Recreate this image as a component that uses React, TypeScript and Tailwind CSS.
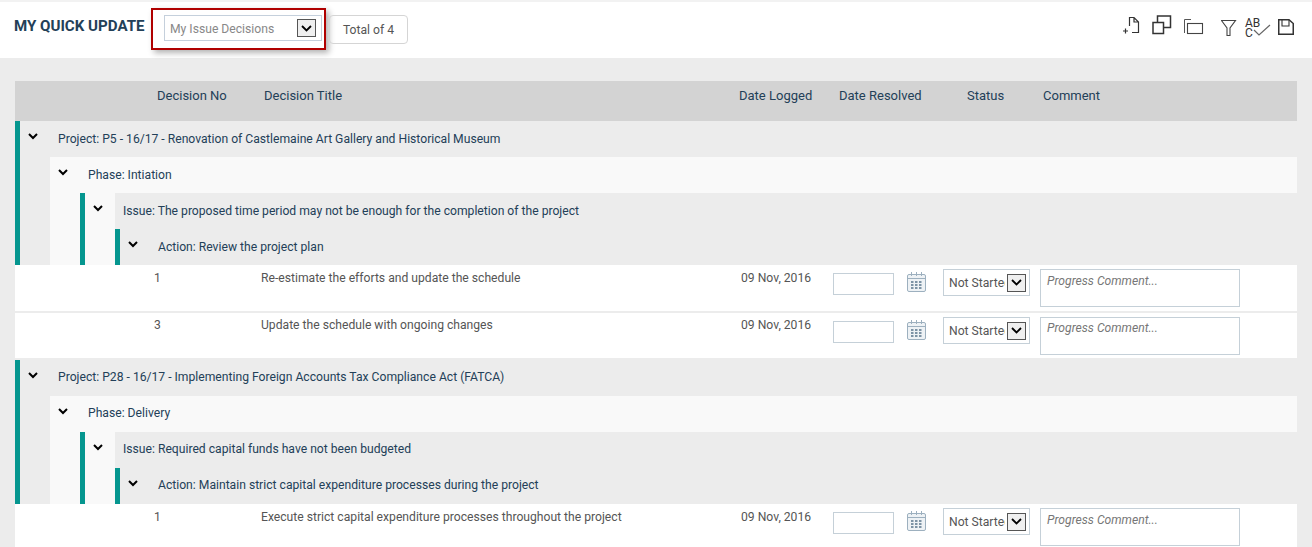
const font = "[font-family:Roboto,'Liberation_Sans',sans-serif]";

function Chevron({ className = "" }: { className?: string }) {
  return (
    <svg width="10" height="7" viewBox="0 0 10 7" className={className}>
      <path d="M1 1l4 4 4-4" fill="none" stroke="#000" strokeWidth="2" />
    </svg>
  );
}

function SelectArrow() {
  return (
    <div className="flex h-[18px] w-[19px] shrink-0 items-center justify-center border border-[#555] bg-[#efefef]">
      <svg width="11" height="7" viewBox="0 0 11 7">
        <path d="M1 1l4.5 4.5L10 1" fill="none" stroke="#000" strokeWidth="1.8" />
      </svg>
    </div>
  );
}

function CalendarIcon() {
  return (
    <svg width="20" height="20" viewBox="0 0 20 20" className="block">
      <rect x="0.5" y="2.5" width="18" height="17" rx="1.5" fill="#eef2f5" stroke="#9db0bf" />
      <path d="M1 6.5h17" stroke="#9db0bf" />
      <path d="M4.5 0v4M9.5 0v4M14.5 0v4" stroke="#9db0bf" />
      <path
        d="M4 9h2.5v2H4zM8 9h2.5v2H8zM12 9h2.5v2H12zM4 12h2.5v2H4zM8 12h2.5v2H8zM12 12h2.5v2H12zM4 15h2.5v2H4zM8 15h2.5v2H8zM12 15h2.5v2H12z"
        fill="#7d93a5"
      />
    </svg>
  );
}

function ToolIcons() {
  return (
    <div className="flex items-start">
      <svg width="18" height="20" viewBox="0 0 18 20" className="mt-[14px] block">
        <path d="M6.5 10V1.5H11L15.5 6V16.5H9M11 1.5V6H15.5" fill="none" stroke="#333" strokeWidth="1.2" />
        <path d="M0 15h5M2.5 12.5v5" stroke="#333" strokeWidth="1.2" />
      </svg>
      <svg width="20" height="20" viewBox="0 0 20 20" className="ml-[11px] mt-[13px] block">
        <rect x="1" y="7.5" width="10.5" height="11" fill="none" stroke="#333" strokeWidth="1.5" />
        <path d="M5.5 7V1H18.5V12.5H12" fill="none" stroke="#333" strokeWidth="1.5" />
      </svg>
      <svg width="20" height="18" viewBox="0 0 20 18" className="ml-[12px] mt-[16px] block">
        <path d="M0.5 15V1.5H7" fill="none" stroke="#555" strokeWidth="1" />
        <rect x="3.5" y="5.5" width="15" height="10" fill="none" stroke="#444" strokeWidth="1.1" />
      </svg>
      <svg width="16" height="18" viewBox="0 0 16 18" className="ml-[17px] mt-[17px] block">
        <path d="M0.5 1.5H14.5L9 9V16.5H6V9z" fill="none" stroke="#444" strokeWidth="1.1" />
      </svg>
      <div className="relative ml-[8px] mt-[16px] h-[21px] w-[26px] text-[12px] leading-[10px] text-[#333]">
        <div>AB</div>
        <div>C</div>
        <svg width="18" height="12" viewBox="0 0 18 12" className="absolute left-[8px] top-[6px]">
          <path d="M1 6l5 5L17 1" fill="none" stroke="#666" strokeWidth="1.2" />
        </svg>
      </div>
      <svg width="17" height="17" viewBox="0 0 17 17" className="ml-[7px] mt-[17px] block">
        <path d="M0.75 0.75H11L15.25 4.5V15.25H0.75z" fill="none" stroke="#333" strokeWidth="1.5" />
        <path d="M4 1V7H11V1" fill="none" stroke="#333" strokeWidth="1.1" />
      </svg>
    </div>
  );
}

type Row = { no: string; title: string; tall?: boolean };

function DataRow({ row }: { row: Row }) {
  const t = row.tall;
  return (
    <div className={`grid grid-cols-[246px_480px_92px_74px_36px_97px_1fr] bg-white text-[12.15px] text-[#555] ${t ? "h-[46px]" : "h-[45px]"}`}>
      <div className={`pl-[139px] leading-[14px] ${t ? "pt-[6px]" : "pt-[5px]"}`}>{row.no}</div>
      <div className={`leading-[14px] ${t ? "pt-[6px]" : "pt-[5px]"}`}>{row.title}</div>
      <div className={`leading-[14px] ${t ? "pt-[6px]" : "pt-[5px]"}`}>09 Nov, 2016</div>
      <div className="pt-[8px]">
        <div className="h-[22px] w-[61px] border border-[#c5d0d8] bg-white" />
      </div>
      <div className="pt-[7px]">
        <CalendarIcon />
      </div>
      <div className="pt-[4px]">
        <div className="flex h-[27px] w-[87px] items-center justify-between border border-[#c5d0d8] pl-[5px] pr-[3px]">
          <span className="w-[56px] overflow-hidden whitespace-nowrap pt-[1px]">Not Started</span>
          <SelectArrow />
        </div>
      </div>
      <div className="pt-[4px]">
        <div className={`h-[38px] w-[200px] border border-[#c5d0d8] px-[6px] italic leading-[14px] text-[#777] ${t ? "py-[4px]" : "py-[3px]"}`}>
          Progress Comment...
        </div>
      </div>
    </div>
  );
}

function GroupTitle({ label, className = "", text, up }: { label: string; className?: string; text: string; up?: boolean }) {
  return (
    <div className={`flex h-[36px] items-center text-[12.15px] text-[#234058] ${className}`}>
      <Chevron className={`-mt-[5px] shrink-0 ${text}`} />
      <span className={`whitespace-nowrap ${up ? "-translate-y-px" : ""}`}>{label}</span>
    </div>
  );
}

function Project({ project, phase, issue, action, up }: { project: string; phase: string; issue: string; action: string; up?: boolean }) {
  return (
    <div className="border-l-[5px] border-[#05968f] bg-[#ececec]">
      <GroupTitle label={project} up={up} className="pl-[8px]" text="mr-[20px]" />
      <div className="ml-[30px] bg-[#f9f9f9]">
        <GroupTitle label={phase} up={up} className="pl-[8px]" text="mr-[20px]" />
        <div className="ml-[30px] border-l-[5px] border-[#05968f]">
          <div className="flex">
            <div className="flex h-[36px] w-[30px] shrink-0 items-center pl-[8px]">
              <Chevron className="-mt-[5px]" />
            </div>
            <div className="flex h-[36px] flex-1 items-center bg-[#ececec] pl-[8px] text-[12.15px] text-[#234058]">
              <span className={`whitespace-nowrap ${up ? "-translate-y-px" : ""}`}>{issue}</span>
            </div>
          </div>
          <div className="ml-[30px] border-l-[5px] border-[#05968f] bg-[#ececec]">
            <GroupTitle label={action} up={up} className="pl-[8px]" text="mr-[20px]" />
          </div>
        </div>
      </div>
    </div>
  );
}

export default function App() {
  return (
    <div className={`h-[547px] w-[1312px] overflow-hidden bg-[#ececec] ${font}`}>
      <div className="flex h-[58px] items-start border-t-2 border-[#f2f2f2] bg-white">
        <h1 className="ml-[14px] mt-[15px] w-[131px] whitespace-nowrap text-[15.1px] font-bold leading-[18px] text-[#234058]">MY QUICK UPDATE</h1>
        <div className="ml-[6px] mt-[6px] h-[42px] w-[175px] border-2 border-[#b00000] pl-[11px] pt-[5px] shadow-[3px_3px_6px_rgba(0,0,0,0.3)]">
          <div className="flex h-[26px] w-[158px] items-center justify-between border border-[#c5d0dc] pl-[5px] pr-[5px] text-[12.15px] text-[#888]">
            <span className="pt-[2px]">My Issue Decisions</span>
            <SelectArrow />
          </div>
        </div>
        <div className="ml-[3px] mt-[13px] flex h-[29px] w-[79px] items-center justify-center rounded-[4px] border border-[#d5d5d5] pt-[1px] text-[12.15px] text-[#555]">
          Total of 4
        </div>
        <div className="ml-auto mr-[17px]">
          <ToolIcons />
        </div>
      </div>

      <div className="mx-[15px] mt-[23px]">
        <div className="grid h-[40px] grid-cols-[142px_107px_475px_100px_128px_76px_1fr] items-center bg-[#d3d3d3] pb-[11px] text-[13px] text-[#234058]">
          <div />
          <div>Decision No</div>
          <div>Decision Title</div>
          <div>Date Logged</div>
          <div>Date Resolved</div>
          <div>Status</div>
          <div>Comment</div>
        </div>

        <Project
          project="Project: P5 - 16/17 - Renovation of Castlemaine Art Gallery and Historical Museum"
          phase="Phase: Intiation"
          issue="Issue: The proposed time period may not be enough for the completion of the project"
          action="Action: Review the project plan"
        />
        <DataRow row={{ no: "1", title: "Re-estimate the efforts and update the schedule", tall: true }} />
        <div className="h-[2px]" />
        <DataRow row={{ no: "3", title: "Update the schedule with ongoing changes" }} />
        <div className="h-[2px]" />
        <Project
          up
          project="Project: P28 - 16/17 - Implementing Foreign Accounts Tax Compliance Act (FATCA)"
          phase="Phase: Delivery"
          issue="Issue: Required capital funds have not been budgeted"
          action="Action: Maintain strict capital expenditure processes during the project"
        />
        <DataRow row={{ no: "1", title: "Execute strict capital expenditure processes throughout the project", tall: true }} />
      </div>
    </div>
  );
}
